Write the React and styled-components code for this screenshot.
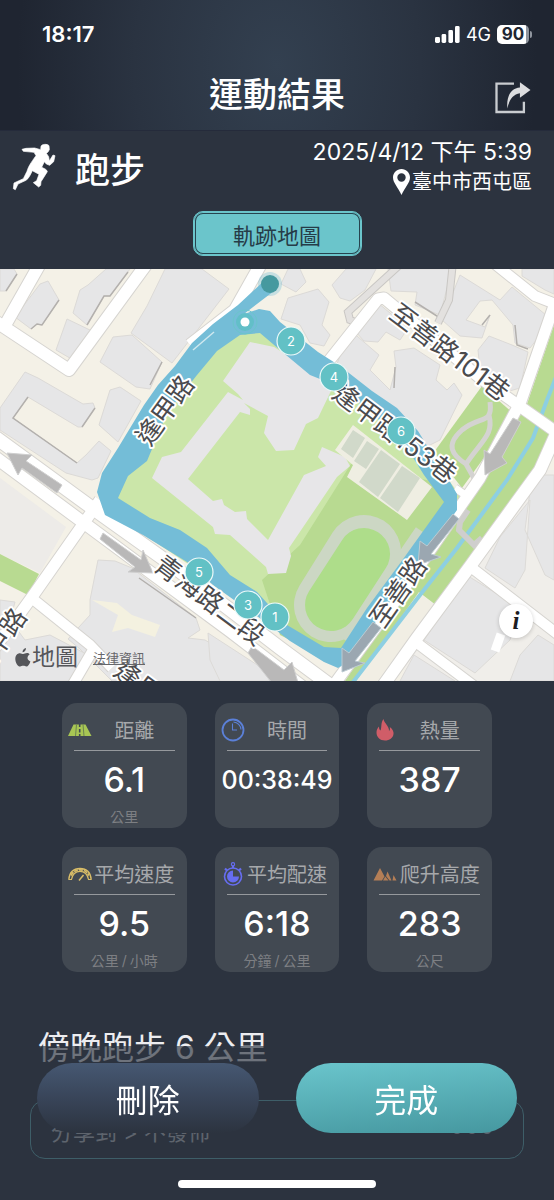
import styled, { createGlobalStyle } from "styled-components";

const GlobalStyle = createGlobalStyle`
  * {
    box-sizing: border-box;
  }

  body {
    margin: 0;

    background: #2c333f;
    color: #fff;

    font-family: Inter, "Noto Sans CJK TC", sans-serif;
  }

  button {
    border: none;
    padding: 0;

    color: inherit;
    background: none;

    font-family: inherit;
    cursor: pointer;
  }

  h1, h2, h3, p, dl, dt, dd {
    margin: 0;
  }

  svg {
    display: block;
  }
`;

const Page = styled.div`
  display: flex;
  flex-direction: column;

  min-height: 100vh;
`;

const TopBar = styled.header`
  height: 130px;

  background: radial-gradient(ellipse 260px 340px at 50% 50%, #334050 0%, #2a3341 55%, #1f2531 100%);
`;

const StatusBar = styled.div`
  display: flex;
  align-items: center;
  justify-content: space-between;

  height: 60px;
  padding: 8px 22px 0 42px;

  font-size: 22px;
  font-weight: 600;
`;

const StatusIcons = styled.div`
  display: flex;
  align-items: center;
  gap: 6px;

  font-size: 18px;
  font-weight: 400;
`;

const BatteryLevel = styled.span`
  display: flex;
  align-items: center;
  gap: 1px;

  &::after {
    content: "";

    width: 2px;
    height: 7px;
    border-radius: 0 2px 2px 0;

    background: #8f959e;
  }
`;

const Battery = styled.span`
  display: flex;
  align-items: center;
  justify-content: center;

  width: 32px;
  height: 19px;
  border-radius: 5px;

  color: #202632;
  background: linear-gradient(90deg, #fff 90%, #8f959e 90%);

  font-size: 17px;
  font-weight: 700;
`;

const TitleRow = styled.div`
  display: grid;
  grid-template-columns: 38px 1fr 38px;
  align-items: center;

  height: 70px;
  padding: 0 22px;

  h1 {
    font-size: 34px;
    font-weight: 500;
    line-height: 40px;
    text-align: center;
  }

  button {
    grid-column: 3;
    padding-top: 4px;
  }
`;

const Summary = styled.section`
  display: flex;
  flex-direction: column;
  align-items: center;

  height: 139px;
  border-top: 1px solid #252b3b;
`;

const SummaryRow = styled.div`
  display: flex;
  justify-content: space-between;

  width: 100%;
  height: 80px;
  padding: 6px 22px 0 11px;
`;

const Activity = styled.h2`
  display: flex;
  align-items: center;
  gap: 18px;

  height: 60px;

  font-size: 35px;
  font-weight: 500;
`;

const Meta = styled.div`
  display: flex;
  flex-direction: column;
  align-items: flex-end;

  font-size: 23px;
  line-height: 30px;
`;

const Place = styled.span`
  display: flex;
  align-items: center;
  gap: 2px;

  font-size: 20px;
  line-height: 30px;
`;

const MapButton = styled.button`
  width: 169px;
  height: 45px;
  border: 1px solid #6bc5cb;
  border-radius: 10px;

  color: #263c48;
  background: #6bc5cb;
  box-shadow: inset 0 0 0 1px #6bc5cb, inset 0 0 0 2px #27444f;

  font-size: 22px;
`;

const MapPanel = styled.section`
  position: relative;

  background: #f4f1e7;

  > svg {
    width: 100%;
    height: auto;
  }
`;

const MapLabel = styled.text`
  fill: #4b4b4e;
  stroke: #fff;
  stroke-width: 4px;
  stroke-linejoin: round;
  paint-order: stroke;

  font-size: 26px;
  font-weight: 400;
  text-anchor: middle;
  dominant-baseline: central;
`;

const MarkerText = styled.text`
  fill: #fff;

  font-size: 13px;
  text-anchor: middle;
  dominant-baseline: central;
`;

const Attribution = styled.div`
  position: absolute;
  left: 15px;
  bottom: 8px;

  display: flex;
  align-items: center;
  gap: 15px;

  color: #55565a;

  span {
    display: flex;
    align-items: center;
    gap: 1px;

    font-size: 23px;
    line-height: 32px;
  }

  a {
    color: #66676b;

    font-size: 13px;
  }
`;

const InfoButton = styled.button`
  position: absolute;
  right: 21px;
  bottom: 43px;

  display: grid;
  place-items: center;

  width: 34px;
  height: 34px;
  border-radius: 50%;

  color: #1c1c22;
  background: #fff;
  box-shadow: 0 1px 4px rgba(0, 0, 0, 0.2);

  font-family: "Liberation Serif", serif;
  font-size: 25px;
  font-style: italic;
  font-weight: 700;
`;

const Stats = styled.dl`
  display: grid;
  grid-template-columns: repeat(3, minmax(0, 1fr));
  gap: 19px 28px;

  padding: 22px 62px 0;
`;

const Card = styled.div`
  height: 125px;
  border-radius: 15px;

  background: #424952;

  dt {
    display: flex;
    align-items: center;
    gap: 2px;

    height: 47px;
    padding: 6px 12px 0 6px;
  }

  dd {
    display: flex;
    flex-direction: column;
    align-items: center;

    margin: 0 12px;
    border-top: 1px solid #96999d;
  }
`;

const CardLabel = styled.span`
  flex: 1;

  color: #a6a8ab;

  font-size: 20px;
  text-align: center;
  white-space: nowrap;
`;

const CardValue = styled.span`
  font-size: ${({ $small }) => ($small ? "25px" : "34px")};
  font-weight: 500;
  line-height: 58px;
`;

const CardUnit = styled.span`
  color: #7d7f83;

  font-size: 14px;
  line-height: 16px;

  i {
    padding: 0 3px;

    font-style: normal;
  }
`;

const Post = styled.section`
  padding: 52px 30px 42px;

  h3 {
    padding-left: 8px;

    color: #ededf0;

    font-size: 32px;
    font-weight: 400;
    line-height: 48px;
  }
`;

const ShareRow = styled.button`
  display: flex;
  align-items: center;
  justify-content: space-between;

  width: 100%;
  height: 59px;
  margin-top: 28px;
  padding: 0 31px 0 20px;
  border: 1px solid #62b0b6;
  border-radius: 15px;

  color: #bfc1c5;

  font-size: 22px;
`;

const BottomBar = styled.footer`
  position: fixed;
  right: 0;
  bottom: 0;
  left: 0;

  display: flex;
  flex-direction: column;
  align-items: center;
  justify-content: space-between;

  height: 154px;
  padding: 17px 37px 12px;

  background: rgba(44, 51, 63, 0.66);
`;

const Actions = styled.div`
  display: grid;
  grid-template-columns: 1fr 1fr;
  gap: 37px;

  width: 100%;
`;

const ActionButton = styled.button`
  height: 70px;
  border-radius: 35px;

  background: ${({ $primary }) =>
    $primary ? "linear-gradient(175deg, #6ac5cc, #45979f)" : "linear-gradient(180deg, #465872, #364154 60%, #2c333f)"};

  font-size: 32px;
`;

const HomeIndicator = styled.div`
  width: 198px;
  height: 8px;
  border-radius: 4px;

  background: #fff;
`;

const SignalIcon = () => (
  <svg width="25" height="17" viewBox="0 0 25 17" fill="#fff">
    <rect x="0" y="11" width="5" height="6" rx="1.4" />
    <rect x="6.6" y="8" width="4.6" height="9" rx="1.4" />
    <rect x="13.4" y="4" width="4.6" height="13" rx="1.4" />
    <rect x="20" y="0" width="4.6" height="17" rx="1.4" />
  </svg>
);

const ShareIcon = () => (
  <svg width="38" height="33" viewBox="0 0 114 100">
    <path d="M60 8H7V94H90V63" fill="none" stroke="#c9ccd0" strokeWidth="7" />
    <path d="M40 83C36 45 52 22 78 20V4L110 27 78 51V37C58 40 46 55 40 83Z" fill="#dcdddf" />
  </svg>
);

const RunnerIcon = () => (
  <svg width="46" height="48" viewBox="30 38 132 144" fill="#fff" stroke="#fff" strokeWidth="2" strokeLinejoin="round">
    <path d="M117 48C120 41 135 40 141 46L142 58 138 65 133 69 140 79 142 92 153 74 159 76 155 94 143 105 133 101 127 94 119 111C128 115 135 118 136 124L117 154 116 165 110 170 94 157 104 151 111 132 91 121C86 132 80 145 72 150L48 161 40 178 34 175 36 158 64 145 75 123C79 109 86 98 102 76L96 66 64 63 60 57 72 54 98 53 116 58Z" />
  </svg>
);

const PinIcon = () => (
  <svg width="17" height="26" viewBox="0 0 17 26">
    <path
      d="M8.5 0C3.8 0 0 3.8 0 8.5C0 14 5 18 8.5 26C12 18 17 14 17 8.5C17 3.8 13.2 0 8.5 0ZM8.5 4.3A4.2 4.2 0 1 1 8.5 12.7A4.2 4.2 0 1 1 8.5 4.3Z"
      fill="#fff"
      fillRule="evenodd"
    />
  </svg>
);

const AppleIcon = () => (
  <svg width="16" height="19" viewBox="0 0 16 19" fill="#55565a">
    <path d="M11 0C11 2.5 9.5 4.3 7.5 4.3 7.4 2.2 9 .4 11 0ZM14.6 6.5C11.5 8.5 12 12 15.4 13.4 14.5 16 13 18.5 11.4 18.5 10.2 18.5 9.8 17.8 8.3 17.8 6.8 17.8 6.3 18.5 5.2 18.5 2.8 18.5.3 14.5.3 10.9.3 7.3 2.5 5.2 4.9 5.2 6.3 5.2 7.3 6.1 8.3 6.1 9.2 6.1 10.4 5.1 12 5.1 13 5.1 14 5.6 14.6 6.5Z" />
  </svg>
);

const RoadIcon = () => (
  <svg width="24" height="24" viewBox="0 0 24 24">
    <path d="M5.5 6.5H17.5L23.5 18H0Z" fill="#a8c654" />
    <path d="M11.7 6V9M11.7 11V14.5M11.7 16V18" stroke="#424952" strokeWidth="1.6" />
    <path d="M8.5 6.5 7.5 18M15 6.5 16 18" stroke="#6d8350" strokeWidth="1" />
  </svg>
);

const ClockIcon = () => (
  <svg width="24" height="24" viewBox="0 0 24 24" fill="none" stroke="#5b80d8">
    <circle cx="12" cy="12" r="10.5" strokeWidth="1.8" />
    <path d="M11.5 5.5V12H16M12.500 4A8 8 0 0 1 20 11.5" strokeWidth="1.1" />
  </svg>
);

const FlameIcon = () => (
  <svg width="24" height="24" viewBox="0 0 24 24" fill="#d05d68">
    <path d="M10.5 1C11 5 16.5 8.5 16 13 17 12.2 17.2 10.5 16.8 9 20 11.5 20.8 14 20.5 16 20 20 16.5 22.5 12 22.5 7 22.5 3.5 19 3.5 14.5 3.5 12 4.5 10 6 8.5 6 10.5 6.3 11.5 7.5 12.5 9 9 7.5 5 10.5 1Z" />
  </svg>
);

const GaugeIcon = () => (
  <svg width="24" height="24" viewBox="0 0 24 24" fill="none" stroke="#d9bd68">
    <path d="M.8 17.500C1.500 10 6 6.500 12 6.500S22.500 10 23.200 17.500" strokeWidth="1.300" />
    <path d="M3.500 17.500C4.500 12 8 9.300 12 9.300S19.500 12 20.500 17.500" strokeWidth="1.200" />
    <path d="M3 13.500C5.500 9 8.500 7.900 12 7.900S18.500 9 21 13.500" strokeWidth="1.800" strokeDasharray="4 1" />
    <path d="M11 18.500 15.500 13" strokeWidth="1.500" />
    <path d="M.5 17.500H4M20 17.500H23.500" strokeWidth="1" />
  </svg>
);

const StopwatchIcon = () => (
  <svg width="24" height="24" viewBox="0 0 24 24" fill="none" stroke="#666df0">
    <circle cx="12" cy="14.5" r="8.5" strokeWidth="1.6" />
    <circle cx="12" cy="2.2" r="1.6" strokeWidth="1.2" />
    <path d="M12 4V6M4 6.5 6 8.5M20 6.5 18 8.5" strokeWidth="2.2" />
    <path d="M12 14.5V8.5A6 6 0 1 0 18 14.5Z" fill="#666df0" stroke="none" />
  </svg>
);

const MountainIcon = () => (
  <svg width="24" height="24" viewBox="0 0 24 24" fill="#b47e56">
    <path d="M7 6 11.5 14.5 9 18.5H0.5ZM14.5 9.5 18.5 18.5H16.5L13 14ZM12.3 14.5 15.5 18.5H10ZM20.5 13 23.5 18.5H19.5Z" />
  </svg>
);

const markers = [
  { id: 2, x: 291, y: 341 },
  { id: 4, x: 334, y: 377 },
  { id: 6, x: 401, y: 431 },
  { id: 5, x: 199, y: 572 },
  { id: 3, x: 248, y: 605 },
  { id: 1, x: 275, y: 617 },
];

const roads = [
  { d: "M41 262 4 327 69 370 148 262M4 327-8 319", w: 12 },
  { d: "M-5 437 95 510 165 560 280 648 330 685", w: 13 },
  { d: "M-5 457 84 523 150 572 230 631 304 688", w: 12 },
  { d: "M100 500 32 597-8 652", w: 11 },
  { d: "M34 600 90 645 112 668M93 650 72 686", w: 10 },
  { d: "M262 262 235 310 190 345", w: 12 },
  { d: "M328 362 378 299 384 298 480 378 556 432", w: 11 },
  { d: "M490 260 535 296 558 305", w: 10 },
  { d: "M556 300 521 401 480 478 455 514 396 600 333 686", w: 11 },
  { d: "M560 425 540 470 471 565 417 638 380 690", w: 12 },
  { d: "M472 568 560 636M417 643 474 686", w: 10 },
  { d: "M455 488 470 498", w: 7 },
];

const buildings = [
  "M0 269H14L17 274 6 291H0Z",
  "M40 284 48 281 59 300 42 325 37 324 31 329 15 317Z",
  "M106 269H130L110 296 104 296 87 325 73 313 80 290 88 285Z",
  "M67 319 92 331 75 361 56 350Z",
  "M165 269H202L229 289 172 363 131 333 147 306Z",
  "M113 337 132 335 162 362 150 389 136 387 100 362Z",
  "M110 390 120 387 141 401 118 442 99 425Z",
  "M25 372 38 378 83 404 93 403 95 408 82 427 78 427 28 397 13 418 77 463 86 455 99 441 111 451 98 478 92 480 66 473 0 430V408Z",
  "M281 284 296 292 306 282 300 269H288ZM288 298 318 289 329 302 322 325 330 335 324 346 310 343 300 325 281 319Z",
  "M332 285 346 269H376L365 290 350 301 340 298Z",
  "M388 269H452L440 315 415 305 417 292 391 291Z",
  "M365 315 378 303 408 328 400 340 386 332 378 342 364 341 355 331Z",
  "M350 330 379 355 370 370 390 390 396 367 394 351 414 348 440 365 436 380 447 390 454 383 462 395 440 440 420 450 400 415 335 369Z",
  "M460 275 500 300 512 287 552 320 530 348 515 343 513 325 492 300 480 301 466 320 485 327 490 315 482 338 460 336 442 320Z",
  "M489 336 512 345 528 352 520 388 506 392 480 370 478 350Z",
  "M522 269H554V294L545 290 522 276Z",
  "M98 560 115 561 132 568 196 618 200 630 188 638 205 640 230 655 250 681H112L80 649 68 639 90 615 90 600Z",
  "M208 633 262 668 270 681H220L210 660Z",
  "M0 600 15 602 10 620 25 640 50 635 88 655 75 681H0Z",
  "M554 475H532L525 530 545 575 554 580ZM500 537 530 500 525 570 515 588 485 568Z",
  "M468 576 520 608 510 640 475 673 424 640Z",
  "M554 645 538 635 520 655 510 681H554ZM414 655 455 681H400Z",
];

const routePath =
  "M266 279 238 305 213 324 192 343 175 366 158 385 144 405 118 448 102 473 97 492 105 515 143 535 187 562 213 585 234 600 268 624 290 641 324 662 338 668 348 662 386 607 430 548 457 510 457 494 446 475 434 457 418 431 397 408 372 391 340 366 318 352 280 322 270 311 259 309 250 312 244 314 274 291ZM260 333 280 350 310 375 340 387 385 425 407 448 424 475 444 502 401 562 367 608 341 648 324 647 287 625 257 592 230 575 207 548 180 530 150 518 118 498 128 476 147 461 167 413 197 375 217 351 240 335Z";

const TrackMap = () => (
  <svg viewBox="0 269 554 412" role="img" aria-label="軌跡地圖">
    <rect y="269" width="554" height="412" fill="#f4f1e7" />
    <path d="M0 478 66 527 40 573 0 554Z" fill="#edebe8" />
    <path d="M0 554 39 574 28 595 0 581Z" fill="#b8da91" />
    <path d="M480 470H554V681H400Z" fill="#f0eeea" />
    <g fill="#e6e6e7" stroke="#dcdad7" strokeWidth="1" strokeLinejoin="round">
      {buildings.map((d) => (
        <path key={d} d={d} />
      ))}
    </g>
    <path
      d="M17 274 6 291M59 300 42 325 37 324 31 329M128 272 110 296 104 296 87 325M162 362 150 385M95 408 82 427M28 397 13 418 77 463M528 349 517 345 515 325M490 315 482 325M395 367 394 388M139 578 196 618M415 302 440 318"
      fill="none"
      stroke="#b3b0ad"
      strokeWidth="1.5"
    />
    <path d="M92 600 117 603 132 615 160 625 155 637 128 628 112 632 118 615Z" fill="#f4f1e0" />
    <path d="M554 325 527 404 515 420 480 478 345 681H362L420 593 436 605 541 472 554 450Z" fill="#b8da91" />
    <path d="M482 386 434 452 462 488 515 415Z" fill="#b8da91" />
    <path d="M262 320 330 365 410 430 460 495 455 520 340 662 290 640 200 572 100 505 150 440 215 345Z" fill="#cbe6a9" />
    <path d="M351 464 450 485 455 520 340 665 280 635 262 580 300 545Z" fill="#b8da91" />
    <path d="M419 592 434 605 377 681H356Z" fill="#f1eee4" />
    <path
      d="M250 342 223 381 238 394 243 400 228 392 181 452 162 457 152 478 213 527 215 534 230 535 266 567 268 574 286 573 291 556 289 548 337 477 350 466 345 457 322 447 318 457 326 466 304 475 268 540 247 519 246 511 235 512 224 505 222 499 213 501 188 479 240 412 250 415 250 409 244 403 268 416 264 433 276 451 294 450 306 424 318 418 330 393 334 385 274 347Z"
      fill="#e7e6e8"
    />
    <path d="M353 425 335 450 353 465 347 477 407 520 432 487Z" fill="#efeee2" />
    <path
      d="M353 430 365 438 353 458 341 449ZM367 441 379 449 366 469 354 461ZM381 450 400 464 378 497 359 482ZM402 466 420 478 398 512 380 498Z"
      fill="#d1d9ca"
    />
    <path d="M364 552 331 605" stroke="#ccd7c4" strokeWidth="74" strokeLinecap="round" />
    <path d="M420 530 345 640" stroke="#ccd7c4" strokeWidth="10" />
    <path d="M364 554 331 605" stroke="#aedd8a" strokeWidth="52" strokeLinecap="round" />
    <path
      d="M490 402C493 425 480 415 462 430 445 445 452 455 466 464 482 440 494 435 489 415M466 464 475 480"
      fill="none"
      stroke="#d4d3d1"
      strokeWidth="5"
    />
    <path d="M403 262 348 312 350 320 358 323M453 262 449 300 438 323" fill="none" stroke="#c9c7c4" strokeWidth="8" />
    <path d="M403 262 348 312 350 320 358 323M453 262 449 300 438 323" fill="none" stroke="#e3e1df" strokeWidth="6" />
    <path d="M558 372 547 400 533 438 507 480 457 548 420 595 350 686" fill="none" stroke="#8dcfe2" strokeWidth="4" />
    <path d="M468 510 460 522 459 530 474 545 482 538" fill="none" stroke="#cfcecd" strokeWidth="6" />
    <g fill="none" stroke="#d6d4d0" strokeLinejoin="round">
      {roads.map((road) => (
        <path key={road.d} d={road.d} strokeWidth={road.w + 2} />
      ))}
    </g>
    <g fill="none" stroke="#fff" strokeLinejoin="round">
      {roads.map((road) => (
        <path key={road.d} d={road.d} strokeWidth={road.w} />
      ))}
    </g>
    <path d="M501 634 495 651" stroke="#fff" strokeWidth="9" />
    <path d={routePath} fill="#74bdd7" fillRule="evenodd" />
    <path d="M193 350 214 332" stroke="#cfe8ef" strokeWidth="1.5" />
    <g fill="#b9b8b8" stroke="#cfcfcf" strokeWidth="1">
      <path d="M7 453 32 455 26 461 62 485 57 493 22 468 18 475Z" />
      <path d="M103 533 141 560 143 550 153 573 128 572 135 567 100 539Z" />
      <path d="M513 418 521 422 502 457 507 463 485 475 484 450 490 454Z" />
      <path d="M252 646 284 670 292 662 299 686 272 683 248 653Z" />
    </g>
    <g fill="#9ba7b1" stroke="#bccbd2" strokeWidth="1">
      <path d="M453 514 459 519 431 554 441 557 418 565 420 541 427 546Z" />
      <path d="M373 622 381 628 355 661 365 663 342 672 342 648 349 653Z" />
    </g>
    <MapLabel transform="translate(165 410) rotate(-54)">逢甲路</MapLabel>
    <MapLabel transform="translate(450 352) rotate(37)">至善路101巷</MapLabel>
    <MapLabel transform="translate(395 433) rotate(37)">逢甲路153巷</MapLabel>
    <MapLabel transform="translate(210 600) rotate(37)">青海路二段</MapLabel>
    <MapLabel transform="translate(398 592) rotate(-55)">至善路</MapLabel>
    <MapLabel transform="translate(-2 643) rotate(-55)">逢甲路</MapLabel>
    <MapLabel transform="translate(149 690) rotate(37)">逢甲路</MapLabel>
    <circle cx="270" cy="284" r="12" fill="#74bdd7" opacity="0.35" />
    <circle cx="270" cy="284" r="9" fill="#46999f" />
    <circle cx="245" cy="322" r="12" fill="none" stroke="#6bc5cb" strokeWidth="1" />
    <circle cx="245" cy="322" r="9" fill="#62bfc8" />
    <circle cx="245" cy="322" r="4.5" fill="#fff" />
    {markers.map(({ id, x, y }) => (
      <g key={id}>
        <circle cx={x} cy={y} r="14" fill="#62c1c5" stroke="#eefafa" strokeWidth="1.2" />
        <MarkerText x={x} y={y}>
          {id}
        </MarkerText>
      </g>
    ))}
  </svg>
);

const stats = [
  { label: "距離", value: "6.1", unit: ["公里"], Icon: RoadIcon },
  { label: "時間", value: "00:38:49", small: true, Icon: ClockIcon },
  { label: "熱量", value: "387", Icon: FlameIcon },
  { label: "平均速度", value: "9.5", unit: ["公里", "小時"], Icon: GaugeIcon },
  { label: "平均配速", value: "6:18", unit: ["分鐘", "公里"], Icon: StopwatchIcon },
  { label: "爬升高度", value: "283", unit: ["公尺"], Icon: MountainIcon },
];

const App = () => {
  return (
    <Page>
      <GlobalStyle />
      <TopBar>
        <StatusBar>
          <span>18:17</span>
          <StatusIcons>
            <SignalIcon />
            <span>4G</span>
            <BatteryLevel>
              <Battery>90</Battery>
            </BatteryLevel>
          </StatusIcons>
        </StatusBar>
        <TitleRow>
          <span />
          <h1>運動結果</h1>
          <button aria-label="分享">
            <ShareIcon />
          </button>
        </TitleRow>
      </TopBar>

      <Summary>
        <SummaryRow>
          <Activity>
            <RunnerIcon />
            跑步
          </Activity>
          <Meta>
            <span>2025/4/12 下午 5:39</span>
            <Place>
              <PinIcon />
              臺中市西屯區
            </Place>
          </Meta>
        </SummaryRow>
        <MapButton>軌跡地圖</MapButton>
      </Summary>

      <MapPanel>
        <TrackMap />
        <Attribution>
          <span>
            <AppleIcon />
            地圖
          </span>
          <a href="#legal">法律資訊</a>
        </Attribution>
        <InfoButton aria-label="地圖資訊">i</InfoButton>
      </MapPanel>

      <Stats>
        {stats.map(({ label, value, unit, small, Icon }) => (
          <Card key={label}>
            <dt>
              <Icon />
              <CardLabel>{label}</CardLabel>
            </dt>
            <dd>
              <CardValue $small={small}>{value}</CardValue>
              {unit && (
                <CardUnit>
                  {unit[0]}
                  {unit[1] && <i>/</i>}
                  {unit[1]}
                </CardUnit>
              )}
            </dd>
          </Card>
        ))}
      </Stats>

      <Post>
        <h3>傍晚跑步 6 公里</h3>
        <ShareRow>
          <span>分享到 &gt; 不發佈</span>
          <svg width="40" height="8" viewBox="0 0 40 8" fill="#bfc1c5">
            <circle cx="5" cy="4" r="4" />
            <circle cx="20" cy="4" r="4" />
            <circle cx="35" cy="4" r="4" />
          </svg>
        </ShareRow>
      </Post>

      <BottomBar>
        <Actions>
          <ActionButton>刪除</ActionButton>
          <ActionButton $primary>完成</ActionButton>
        </Actions>
        <HomeIndicator />
      </BottomBar>
    </Page>
  );
};

export default App;
